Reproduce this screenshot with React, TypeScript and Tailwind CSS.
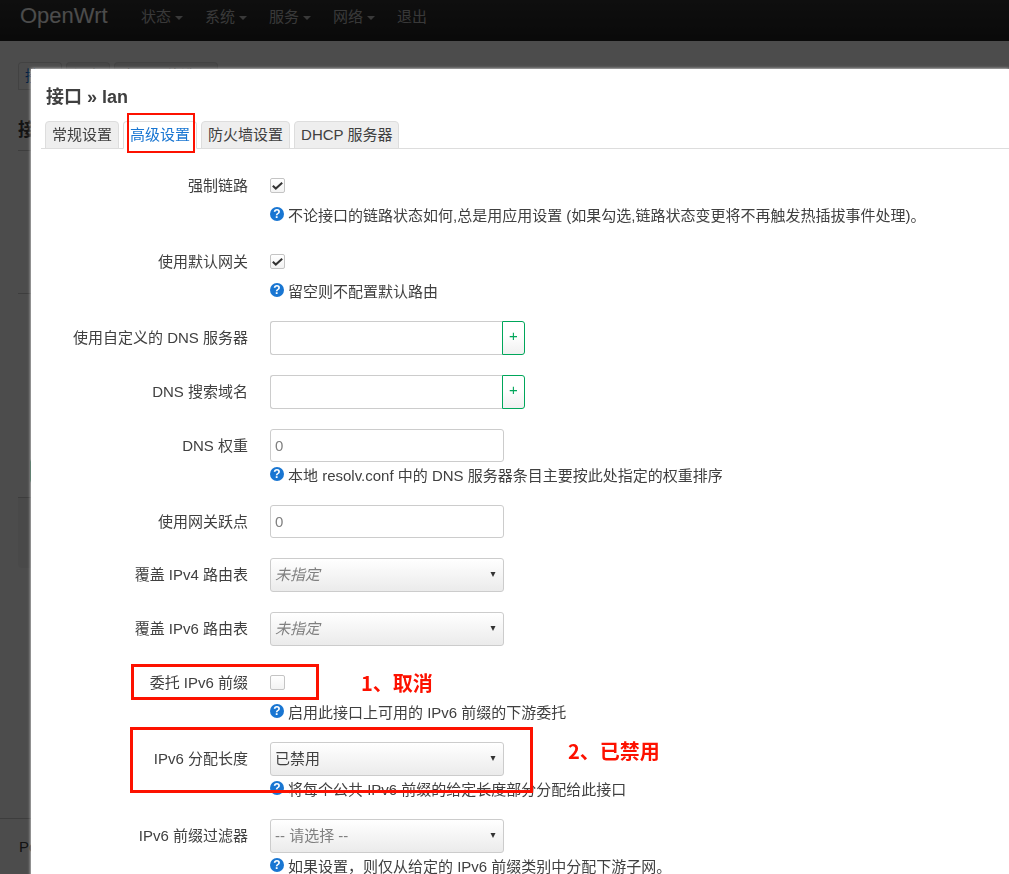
import { useId, useState } from 'react'
import type { ReactNode } from 'react'

const menu = [
  { label: '状态', dropdown: true },
  { label: '系统', dropdown: true },
  { label: '服务', dropdown: true },
  { label: '网络', dropdown: true },
  { label: '退出', dropdown: false },
]

const pageTabs = ['接口', '设备', '全局网络选项']
const modalTabs = ['常规设置', '高级设置', '防火墙设置', 'DHCP 服务器']

function Header() {
  return (
    <header className="flex h-[41px] items-start bg-linear-to-b from-[#333] to-[#222] pl-5">
      <a href="#" className="w-[121px] text-[22px] leading-8 text-white">
        OpenWrt
      </a>
      <nav className="flex leading-[34px] text-[#bfbfbf]">
        {menu.map((item) => (
          <a key={item.label} href="#" className="flex w-16 items-center gap-1">
            {item.label}
            {item.dropdown && (
              <span className="mt-0.5 border-x-4 border-t-4 border-x-transparent border-t-[#bfbfbf]" />
            )}
          </a>
        ))}
      </nav>
    </header>
  )
}

// Página de interfaces que queda detrás del modal
function InterfacesPage() {
  return (
    <div className="flex min-h-screen flex-col bg-white">
      <Header />
      <main className="flex-1 pt-[21px] pl-[18px]">
        <div className="flex gap-1 border-b border-[#ddd]">
          {pageTabs.map((tab, i) => (
            <a
              key={tab}
              href="#"
              className={`rounded-t border border-b-0 border-[#ddd] px-[6px] leading-[26px] ${
                i === 0 ? 'bg-white text-[#0069d6]' : 'bg-[#eee]'
              }`}
            >
              {tab}
            </a>
          ))}
        </div>
        <h2 className="mt-[28px] border-b border-[#ccc] pb-2 text-[18px] leading-6 font-bold">接口</h2>
        <div className="h-[143px] border-b border-[#ccc]" />
        <div className="mt-[164px] ml-3 h-[26px] w-[90px] rounded border border-[#00a65a]" />
        <div className="mt-[13px] h-[71px] rounded-b border-t border-[#ccc] bg-[#f5f5f5]" />
      </main>
      <footer className="h-[56px] border-t border-[#ccc] pl-[19px] leading-[56px]">
        Powered by LuCI
      </footer>
    </div>
  )
}

function Help({ children }: { children: ReactNode }) {
  return (
    <div className="flex h-[23px] gap-[4px] whitespace-nowrap">
      <span className="mt-[5px] flex size-[14px] shrink-0 items-center justify-center rounded-full bg-[#1976d2] text-[12px] leading-none font-bold text-white">
        ?
      </span>
      <span className="leading-[27px]">{children}</span>
    </div>
  )
}

type RowProps = {
  id: string
  label: string
  help?: string
  note?: ReactNode
  children: ReactNode
}

function Row({ id, label, help, note, children }: RowProps) {
  return (
    <div className="relative flex gap-[22px]">
      <label htmlFor={id} className="w-[202px] shrink-0 text-right leading-[33px]">
        {label}
      </label>
      <div>
        {children}
        {help && <Help>{help}</Help>}
      </div>
      {note}
    </div>
  )
}

type FieldProps = { label: string; help?: string; note?: ReactNode }

function CheckField({ checked = false, ...row }: FieldProps & { checked?: boolean }) {
  const id = useId()
  const [on, setOn] = useState(checked)

  return (
    <Row id={id} {...row}>
      <div className="flex h-[33px] items-center">
        <span className="relative size-[15px]">
          <input
            id={id}
            type="checkbox"
            checked={on}
            onChange={(e) => setOn(e.target.checked)}
            className="block size-[15px] appearance-none rounded-[2px] border border-[#c4c4c4] bg-linear-to-b from-white to-[#f3f3f3]"
          />
          {on && (
            <svg
              viewBox="0 0 15 15"
              className="pointer-events-none absolute inset-0 size-[15px]"
              fill="none"
              stroke="#333"
              strokeWidth="2"
            >
              <path d="M2.8 7.8 L5.8 10.6 L12.2 4.8" />
            </svg>
          )}
        </span>
      </div>
    </Row>
  )
}

function TextField(row: FieldProps) {
  const id = useId()

  return (
    <Row id={id} {...row}>
      <input
        id={id}
        type="text"
        placeholder="0"
        className="block h-[33px] w-[234px] rounded-[3px] border border-[#ccc] px-1 placeholder:text-[#808080]"
      />
    </Row>
  )
}

function ListField(row: FieldProps) {
  const id = useId()

  return (
    <Row id={id} {...row}>
      <div className="flex h-[34px]">
        <input
          id={id}
          type="text"
          className="w-[232px] rounded-l-[3px] border border-r-0 border-[#ccc] px-1"
        />
        <button
          type="button"
          className="w-[23px] rounded-r-[3px] border border-[#00a65a] bg-linear-to-b from-white from-40% to-[#f0f0f0] pb-1 text-[#00a65a]"
        >
          +
        </button>
      </div>
    </Row>
  )
}

function SelectField({
  value,
  className,
  ...row
}: FieldProps & { value: string; className?: string }) {
  const id = useId()

  return (
    <Row id={id} {...row}>
      <div className="relative h-[34px] w-[234px]">
        <select
          id={id}
          className={`block size-full appearance-none rounded-[3px] border border-[#ccc] bg-linear-to-b from-white to-[#ebebeb] px-[4px] ${className ?? ''}`}
        >
          <option>{value}</option>
        </select>
        <svg viewBox="0 0 6 5" className="pointer-events-none absolute top-[14px] right-2 h-[5px] w-[6px]">
          <path d="M0.5 0H5.5L3 5Z" fill="#333" />
        </svg>
      </div>
    </Row>
  )
}

function InterfaceModal() {
  const [active, setActive] = useState('高级设置')

  return (
    <div role="dialog" aria-label="接口 » lan" className="min-h-screen bg-white pt-[15px] pb-8 shadow-[0_0_3px_#fff]">
      <h4 className="pl-[15px] text-[18px] leading-[26px] font-bold">接口 » lan</h4>

      <div role="tablist" className="mt-[11px] ml-[10px] flex gap-1 border-b border-[#ddd] pl-1">
        {modalTabs.map((tab) => (
          <div key={tab} className="relative">
            <button
              type="button"
              role="tab"
              aria-selected={tab === active}
              onClick={() => setActive(tab)}
              className={`-mb-px block h-7 rounded-t border border-[#ddd] px-[6px] leading-[26px] ${
                tab === active ? 'border-b-white bg-white text-[#1976d2]' : 'bg-[#eee]'
              }`}
            >
              {tab}
            </button>
            {tab === '高级设置' && (
              <span className="pointer-events-none absolute -top-2 -bottom-[5px] left-1 w-[68px] border-2 border-[#fd1100]" />
            )}
          </div>
        ))}
      </div>

      <form className="mt-5 flex flex-col gap-5 pl-[15px]">
        <CheckField
          label="强制链路"
          checked
          help="不论接口的链路状态如何,总是用应用设置 (如果勾选,链路状态变更将不再触发热插拔事件处理)。"
        />
        <CheckField label="使用默认网关" checked help="留空则不配置默认路由" />
        <ListField label="使用自定义的 DNS 服务器" />
        <ListField label="DNS 搜索域名" />
        <TextField label="DNS 权重" help="本地 resolv.conf 中的 DNS 服务器条目主要按此处指定的权重排序" />
        <TextField label="使用网关跃点" />
        <SelectField label="覆盖 IPv4 路由表" value="未指定" className="text-[#808080] italic" />
        <SelectField label="覆盖 IPv6 路由表" value="未指定" className="text-[#808080] italic" />
        <CheckField
          label="委托 IPv6 前缀"
          help="启用此接口上可用的 IPv6 前缀的下游委托"
          note={
            <>
              <span className="pointer-events-none absolute -top-0.5 left-[85px] h-9 w-[188px] border-3 border-[#fd1100]" />
              <strong className="absolute top-0 left-[315px] font-['Noto_Sans_CJK_SC',sans-serif] text-[20px] leading-[34px] text-[#fd1100]">
                1、取消
              </strong>
            </>
          }
        />
        <SelectField
          label="IPv6 分配长度"
          value="已禁用"
          help="将每个公共 IPv6 前缀的给定长度部分分配给此接口"
          note={
            <>
              <span className="pointer-events-none absolute -top-[15px] left-[84px] h-[66px] w-[403px] border-3 border-[#fd1100]" />
              <strong className="absolute -top-2 left-[522px] font-['Noto_Sans_CJK_SC',sans-serif] text-[20px] leading-[34px] text-[#fd1100]">
                2、已禁用
              </strong>
            </>
          }
        />
        <SelectField
          label="IPv6 前缀过滤器"
          value="-- 请选择 --"
          className="text-[#808080]"
          help="如果设置，则仅从给定的 IPv6 前缀类别中分配下游子网。"
        />
      </form>
    </div>
  )
}

export default function App() {
  return (
    <div
      lang="zh-CN"
      className="font-['Liberation_Sans','Noto_Sans_CJK_SC',sans-serif] text-[15px] text-[#404040]"
    >
      <InterfacesPage />
      <div className="fixed inset-0 overflow-y-auto bg-black/70 pt-[69px] pl-[31px]">
        <InterfaceModal />
      </div>
    </div>
  )
}
